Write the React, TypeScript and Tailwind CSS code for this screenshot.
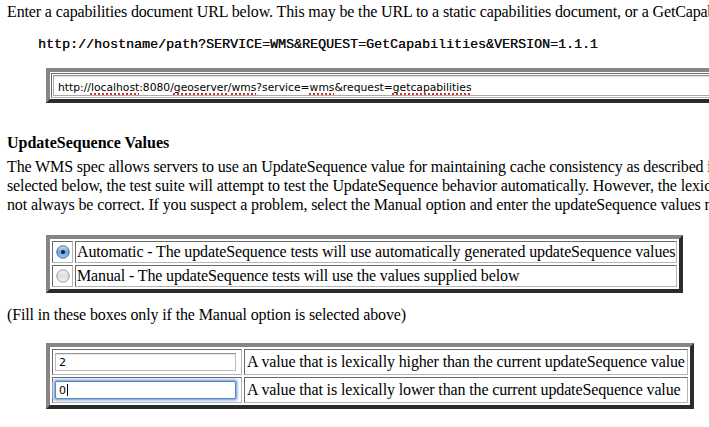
import React from "react";

function Radio({ checked }: { checked: boolean }) {
  return checked ? (
    <svg width="14" height="14" viewBox="0 0 14 14">
      <defs>
        <linearGradient id="aquaOn" x1="0" y1="0" x2="0" y2="1">
          <stop offset="0" stopColor="#cfe2f7" />
          <stop offset="0.5" stopColor="#6fa3e0" />
          <stop offset="1" stopColor="#9cc6f2" />
        </linearGradient>
      </defs>
      <circle cx="7" cy="7" r="6.2" fill="url(#aquaOn)" stroke="#3f5f8c" strokeWidth="0.9" />
      <circle cx="7" cy="7" r="2.1" fill="#14243a" />
    </svg>
  ) : (
    <svg width="14" height="14" viewBox="0 0 14 14">
      <defs>
        <linearGradient id="aquaOff" x1="0" y1="0" x2="0" y2="1">
          <stop offset="0" stopColor="#f4f4f4" />
          <stop offset="0.55" stopColor="#dcdcdc" />
          <stop offset="1" stopColor="#f7f7f7" />
        </linearGradient>
      </defs>
      <circle cx="7" cy="7" r="6.2" fill="url(#aquaOff)" stroke="#8c8c8c" strokeWidth="0.9" />
    </svg>
  );
}

function Spell({ children }: { children: React.ReactNode }) {
  return (
    <span className="underline decoration-dotted decoration-2 decoration-[#d83030] underline-offset-[2px]">
      {children}
    </span>
  );
}

const outer =
  "border-4 border-t-[#868686] border-l-[#868686] border-r-[#2b2b2b] border-b-[#2b2b2b] bg-white";
const cell =
  "border border-t-[#6a6a6a] border-l-[#6a6a6a] border-r-[#b4b4b4] border-b-[#b4b4b4]";

export default function App() {
  return (
    <div className="w-[709px] h-[427px] overflow-hidden bg-white text-black">
      <div className="w-[1200px] pl-[7px] pt-[2px] font-['Liberation_Serif','Times_New_Roman',serif] text-[16px] leading-[19px] tracking-[-0.13px]">
        <p className="whitespace-nowrap">
          Enter a capabilities document URL below. This may be the URL to a static capabilities document, or a GetCapabilities request to a WMS server:
        </p>

        <div className="mt-[16px] ml-[31px] whitespace-nowrap tracking-normal font-['Liberation_Mono','Courier_New',monospace] text-[13.33px] leading-[15px] text-[#111] [text-shadow:0.25px_0_0_#111]">
          http://hostname/path?SERVICE=WMS&amp;REQUEST=GetCapabilities&amp;VERSION=1.1.1
        </div>

        {/* capabilities URL field */}
        <div className={`${outer} mt-[16px] ml-[39px] w-[900px] p-[1px]`}>
          <div className={`${cell} p-[1px]`}>
            <div className="h-[21px] border border-[#a9a9a9] border-t-[#8e8e8e] bg-white pl-[4px] pt-[5px] shadow-[inset_0_1px_1px_rgba(0,0,0,0.12)] whitespace-nowrap tracking-normal font-['DejaVu_Sans',sans-serif] text-[10.75px] leading-[13px]">
              http://<Spell>localhost</Spell>:8080/<Spell>geoserver</Spell>/<Spell>wms</Spell>?service=<Spell>wms</Spell>&amp;request=<Spell>getcapabilities</Spell>
            </div>
          </div>
        </div>

        <h3 className="mt-[30px] font-bold whitespace-nowrap tracking-normal">UpdateSequence Values</h3>

        <div className="mt-[5px] whitespace-nowrap">
          <p>The WMS spec allows servers to use an UpdateSequence value for maintaining cache consistency as described in the specification. When Automatic is</p>
          <p>selected below, the test suite will attempt to test the UpdateSequence behavior automatically. However, the lexical ordering of the values may</p>
          <p>not always be correct. If you suspect a problem, select the Manual option and enter the updateSequence values manually.</p>
        </div>

        {/* mode selection */}
        <div className={`${outer} mt-[21px] ml-[39px] inline-flex flex-col gap-[2px] p-[2px]`}>
          {[
            { on: true, label: "Automatic - The updateSequence tests will use automatically generated updateSequence values" },
            { on: false, label: "Manual - The updateSequence tests will use the values supplied below" },
          ].map((r) => (
            <div key={r.label} className="flex gap-[2px]">
              <div className={`${cell} w-[21px] h-[22px] flex items-center justify-center`}>
                <Radio checked={r.on} />
              </div>
              <div className={`${cell} flex-1 h-[22px] px-[1px] py-[1px] leading-[18px] whitespace-nowrap`}>
                {r.label}
              </div>
            </div>
          ))}
        </div>

        <p className="mt-[12px] whitespace-nowrap">(Fill in these boxes only if the Manual option is selected above)</p>

        {/* manual values */}
        <div className={`${outer} mt-[19px] ml-[39px] inline-flex flex-col gap-[2px] p-[2px]`}>
          <div className="flex gap-[2px]">
            <div className={`${cell} w-[190px] h-[26px] py-[3px] pl-[2px]`}>
              <div className="w-[181px] h-[18px] border border-[#bdbdbd] border-t-[#979797] bg-white pl-[3px] pt-[2px] shadow-[inset_0_1px_1px_rgba(0,0,0,0.1)] tracking-normal font-['DejaVu_Sans',sans-serif] text-[11px] leading-[13px]">
                2
              </div>
            </div>
            <div className={`${cell} flex-1 h-[26px] px-[2px] flex items-center leading-[18px] whitespace-nowrap`}>
              A value that is lexically higher than the current updateSequence value
            </div>
          </div>
          <div className="flex gap-[2px]">
            <div className={`${cell} w-[190px] h-[26px] py-[3px] pl-[2px]`}>
              <div className="w-[181px] h-[18px] rounded-[2px] border border-[#5b87c4] bg-white pl-[3px] pt-[2px] shadow-[0_0_0_1px_#8fb3e2,0_0_0_2.5px_#c4d8f1] tracking-normal font-['DejaVu_Sans',sans-serif] text-[11px] leading-[13px] flex items-start">
                <span>0</span>
                <span className="ml-[1px] w-[1px] h-[12px] bg-black" />
              </div>
            </div>
            <div className={`${cell} flex-1 h-[26px] px-[2px] flex items-center leading-[18px] whitespace-nowrap`}>
              A value that is lexically lower than the current updateSequence value
            </div>
          </div>
        </div>
      </div>
    </div>
  );
}
